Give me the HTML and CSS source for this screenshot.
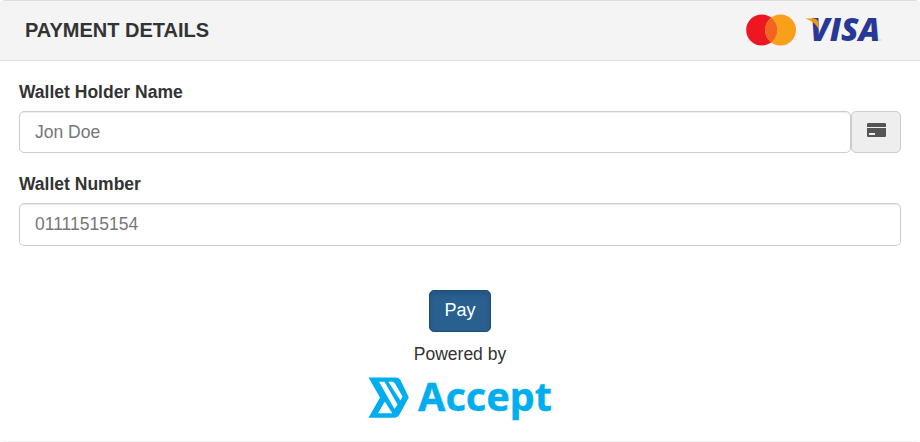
FILE: index.html
```html
<!DOCTYPE html>
<html lang="en">
<head>
<meta charset="utf-8">
<title>Payment Details</title>
<link rel="stylesheet" href="styles.css">
</head>
<body>
<main class="panel">
  <header class="panel-heading">
    <h1 class="panel-title">PAYMENT DETAILS</h1>
    <svg class="cards" width="140" height="36" viewBox="0 0 140 36">
      <circle cx="15.7" cy="18" r="15.5" fill="#ed1722"/>
      <circle cx="34.5" cy="18" r="15.5" fill="#f9a01b"/>
      <path d="M25.1 5.700a15.500 15.500 0 0 1 0 24.600a15.500 15.500 0 0 1 0-24.600z" fill="#f16421"/>
      <text class="visa" x="64" y="29" textLength="70" lengthAdjust="spacingAndGlyphs">VISA</text>
      <path d="M59 6.400h8.500Q71.800 6.600 72.400 11L73 18Q69 9 59 6.400z" fill="#f7980a"/>
      <circle cx="134" cy="28" r=".7" fill="#b7bad7"/>
      <circle cx="50" cy="27.500" r=".5" fill="#fac982"/>
    </svg>
  </header>
  <form class="panel-body">
    <label class="label" for="holder">Wallet Holder Name</label>
    <div class="input-group">
      <input class="control" id="holder" type="text" placeholder="Jon Doe">
      <span class="addon">
        <svg width="19" height="14" viewBox="0 0 19 14">
          <path d="M0 4V1.200Q0 0 1.200 0h16.600Q19 0 19 1.200V4z M0 5h19v7.800Q19 14 17.800 14H1.200Q0 14 0 12.800z" fill="#555"/>
          <path d="M2 10h6v2H2z" fill="#eee"/>
        </svg>
      </span>
    </div>
    <label class="label" for="number">Wallet Number</label>
    <input class="control" id="number" type="text" placeholder="01111515154">
    <div class="actions">
      <button class="pay" type="button">Pay</button>
      <p class="powered">Powered by</p>
      <svg class="accept" width="184" height="46" viewBox="0 0 184 46">
        <path fill="#00aeef" fill-rule="evenodd" d="M.5 1.500h28Q31 1.500 32.500 4L40.800 21.500 31.500 38.500Q29.500 41.700 26.500 41.700H.5L12 21.600z M11 5.800h5.500L29.500 28.500 26.500 33z M20.300 5.800h4.200Q26 5.800 27 7.500L34.500 20.500 32.500 24.500z M16.800 25.500L24.300 37.300H10z"/>
        <text class="brand" x="50" y="35" textLength="134" lengthAdjust="spacingAndGlyphs">Accept</text>
      </svg>
    </div>
  </form>
</main>
</body>
</html>
```
FILE: styles.css
```css
* { box-sizing: border-box; }
body { margin: 0; background: #fff; color: #333; font: 17.5px/26px "Liberation Sans", Arial, sans-serif; }
.panel { height: 442px; border: 1px solid #ddd; border-width: 1px 0; border-bottom-color: #f0f0f0; border-radius: 5px; }
.panel-heading { display: flex; justify-content: space-between; align-items: center; height: 60px; padding: 0 34px 2px 25px; background: #f4f4f4; border-bottom: 1px solid #ddd; border-radius: 4px 4px 0 0; }
.panel-title { margin: 0; font-size: 20px; line-height: 24px; }
.cards { display: block; overflow: visible; }
.visa { font: italic 800 32px "Open Sans", sans-serif; fill: #273896; }
.panel-body { display: flex; flex-direction: column; padding: 18px 19px 0; }
.label { font-weight: bold; margin-bottom: 6px; line-height: 26px; }
.input-group { display: flex; margin-bottom: 18px; }
.control { flex: 1 1 auto; min-width: 0; height: 42px; padding: 0 15px; border: 1px solid #ccc; border-radius: 5px; background: #fff; box-shadow: inset 0 1px 1px rgba(0,0,0,.075); font: 17.5px "Liberation Sans", Arial, sans-serif; outline: 0; }
.panel-body > .control { flex: none; height: 43px; }
.control::placeholder { color: #777; opacity: 1; }
.addon { display: flex; align-items: center; justify-content: center; width: 50px; padding-bottom: 4px; border: 1px solid #ccc; border-radius: 5px; background: #eee; }
.actions { display: flex; flex-direction: column; align-items: center; padding-top: 44px; }
.pay { width: 62px; height: 42px; padding: 0 0 2px; border: 1px solid #204d74; border-radius: 5px; background: #286090; color: #fff; font: 18px "Liberation Sans", Arial, sans-serif; box-shadow: inset 0 3px 5px rgba(0,0,0,.125); }
.powered { margin: 9px 0; }
.accept { display: block; overflow: visible; }
.brand { font: 700 39px/46px "Noto Sans", sans-serif; fill: #00aeef; stroke: #00aeef; stroke-width: .4px; }
```
